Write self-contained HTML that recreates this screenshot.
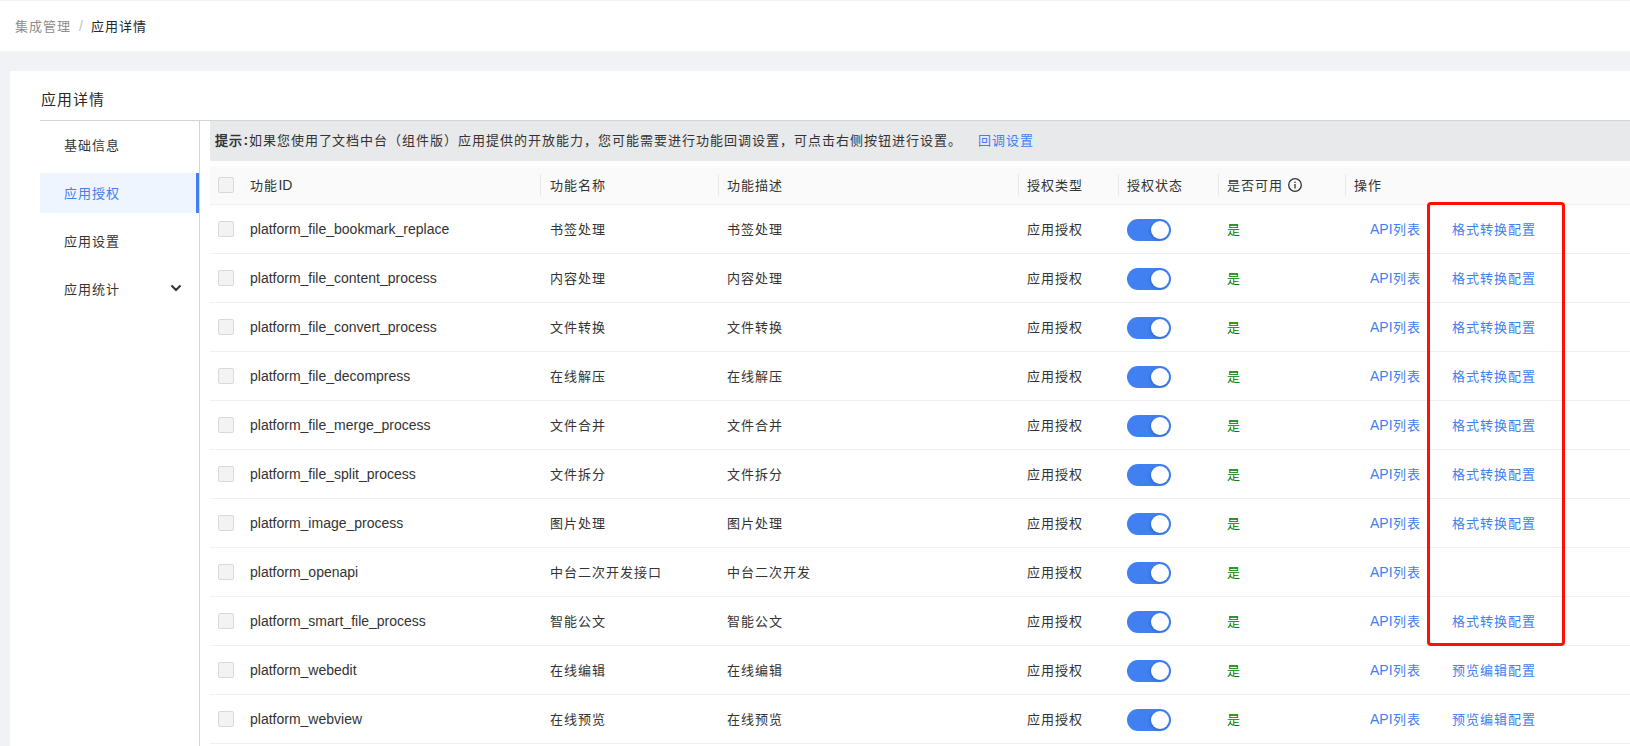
<!DOCTYPE html><html lang="zh-CN"><head><meta charset="utf-8"><style>*{margin:0;padding:0;box-sizing:border-box}
html,body{width:1630px;height:746px;overflow:hidden}
body{background:#f0f2f5;font-family:"Liberation Sans",sans-serif;color:#333;position:relative}
.t14{font-size:14px;line-height:16px;position:absolute;white-space:nowrap}
.t16{font-size:16px;line-height:18px;position:absolute;white-space:nowrap}
.hdr{position:absolute;left:0;top:1px;width:1630px;height:50px;background:#fff}
.card{position:absolute;left:10px;top:71px;width:1620px;height:675px;background:#fff}
.title{left:40px;top:91px;color:#262626}
.divider{position:absolute;left:40px;top:120px;width:1590px;height:1px;background:#d4d4d4}
.sidebar-line{position:absolute;left:199px;top:121px;width:1px;height:625px;background:#d4d4d4}
.active-bg{position:absolute;left:40px;top:173px;width:156px;height:40px;background:#eef5ff}
.active-bar{position:absolute;left:196px;top:173px;width:3px;height:40px;background:#4080f0}
.side{left:64px;color:#333}
.chev{position:absolute;left:170px;top:284px}
.tip{position:absolute;left:210px;top:121px;width:1420px;height:40px;background:#e8e9eb}
.tiptext{left:5px;top:11px;color:#333}
.tiptext b{font-weight:bold}
.tiplink{left:768px;top:11px;color:#4080f0}
.thead{position:absolute;left:210px;top:166px;width:1420px;height:38px;background:#fafafa}
.cb{position:absolute;left:218px;width:16px;height:16px;border:1px solid #d9d9d9;background:#f3f3f3;border-radius:2px}
.th{top:177px;color:#333}
.sep{position:absolute;top:174px;width:1px;height:22px;background:#e8e8e8}
.info{position:absolute;left:1288px;top:178px}
.hb{position:absolute;left:210px;width:1420px;height:1px;background:#f0f0f0}
.td{color:#333}
.lk{color:#4080f0}
.sw{position:absolute;left:1127px;width:44px;height:22px;border-radius:11px;background:#4080f0}
.knob{position:absolute;left:24px;top:2px;width:18px;height:18px;border-radius:9px;background:#fff;box-shadow:-1px 1px 3px rgba(0,30,90,0.25)}
.redbox{position:absolute;left:1427px;top:202px;width:138px;height:444px;border:3px solid #ff1000;border-radius:4px}
.c{font-size:0.93em;letter-spacing:0.0753em;padding-left:0.0376em}
</style></head><body>
<div class="hdr"><div class="topline"></div>
<div class="bc t14" style="left:15px;top:17px;color:#8c8c8c"><span class="c">集成管理</span></div>
<div class="bc t14" style="left:79px;top:17px;color:#c0c0c0">/</div>
<div class="bc t14" style="left:91px;top:17px;color:#262626"><span class="c">应用详情</span></div>
</div>
<div class="card"></div>
<div class="t16 title"><span class="c">应用详情</span></div>
<div class="divider"></div>
<div class="sidebar-line"></div>
<div class="active-bg"></div><div class="active-bar"></div>
<div class="t14 side" style="top:137px"><span class="c">基础信息</span></div>
<div class="t14 side" style="top:185px;color:#4080f0"><span class="c">应用授权</span></div>
<div class="t14 side" style="top:233px"><span class="c">应用设置</span></div>
<div class="t14 side" style="top:281px"><span class="c">应用统计</span></div>
<svg class="chev" width="12" height="8" viewBox="0 0 12 8"><path d="M1.5 1.5 L6 6 L10.5 1.5" fill="none" stroke="#333" stroke-width="2"/></svg>
<div class="tip"><span class="t14 tiptext"><b><span class="c">提示</span>:</b><span class="c">如果您使用了文档中台（组件版）应用提供的开放能力，您可能需要进行功能回调设置，可点击右侧按钮进行设置。</span></span><span class="t14 tiplink"><span class="c">回调设置</span></span></div>
<div class="thead"></div>

<div class="cb" style="top:177px"></div>
<div class="t14 th" style="left:250px"><span class="c">功能</span>ID</div>
<div class="t14 th" style="left:550px"><span class="c">功能名称</span></div>
<div class="t14 th" style="left:727px"><span class="c">功能描述</span></div>
<div class="t14 th" style="left:1027px"><span class="c">授权类型</span></div>
<div class="t14 th" style="left:1127px"><span class="c">授权状态</span></div>
<div class="t14 th" style="left:1227px"><span class="c">是否可用</span></div>
<div class="t14 th" style="left:1354px"><span class="c">操作</span></div>
<div class="sep" style="left:540px"></div>
<div class="sep" style="left:718px"></div>
<div class="sep" style="left:1018px"></div>
<div class="sep" style="left:1118px"></div>
<div class="sep" style="left:1218px"></div>
<div class="sep" style="left:1345px"></div>
<svg class="info" width="14" height="14" viewBox="0 0 14 14"><circle cx="7" cy="7" r="6.3" fill="none" stroke="#333" stroke-width="1.3"/><rect x="6.35" y="6" width="1.3" height="4.5" fill="#333"/><rect x="6.35" y="3.6" width="1.3" height="1.4" fill="#333"/></svg>
<div class="hb" style="top:204px"></div>
<div class="cb" style="top:221px"></div>
<div class="t14 td" style="left:250px;top:221px">platform_file_bookmark_replace</div>
<div class="t14 td" style="left:550px;top:221px"><span class="c">书签处理</span></div>
<div class="t14 td" style="left:727px;top:221px"><span class="c">书签处理</span></div>
<div class="t14 td" style="left:1027px;top:221px"><span class="c">应用授权</span></div>
<div class="sw" style="top:219px"><div class="knob"></div></div>
<div class="t14 td" style="left:1227px;top:221px;color:#008000"><span class="c">是</span></div>
<div class="t14 td lk" style="left:1370px;top:221px">API<span class="c">列表</span></div>
<div class="t14 td lk" style="left:1452px;top:221px"><span class="c">格式转换配置</span></div>
<div class="hb" style="top:253px"></div>
<div class="cb" style="top:270px"></div>
<div class="t14 td" style="left:250px;top:270px">platform_file_content_process</div>
<div class="t14 td" style="left:550px;top:270px"><span class="c">内容处理</span></div>
<div class="t14 td" style="left:727px;top:270px"><span class="c">内容处理</span></div>
<div class="t14 td" style="left:1027px;top:270px"><span class="c">应用授权</span></div>
<div class="sw" style="top:268px"><div class="knob"></div></div>
<div class="t14 td" style="left:1227px;top:270px;color:#008000"><span class="c">是</span></div>
<div class="t14 td lk" style="left:1370px;top:270px">API<span class="c">列表</span></div>
<div class="t14 td lk" style="left:1452px;top:270px"><span class="c">格式转换配置</span></div>
<div class="hb" style="top:302px"></div>
<div class="cb" style="top:319px"></div>
<div class="t14 td" style="left:250px;top:319px">platform_file_convert_process</div>
<div class="t14 td" style="left:550px;top:319px"><span class="c">文件转换</span></div>
<div class="t14 td" style="left:727px;top:319px"><span class="c">文件转换</span></div>
<div class="t14 td" style="left:1027px;top:319px"><span class="c">应用授权</span></div>
<div class="sw" style="top:317px"><div class="knob"></div></div>
<div class="t14 td" style="left:1227px;top:319px;color:#008000"><span class="c">是</span></div>
<div class="t14 td lk" style="left:1370px;top:319px">API<span class="c">列表</span></div>
<div class="t14 td lk" style="left:1452px;top:319px"><span class="c">格式转换配置</span></div>
<div class="hb" style="top:351px"></div>
<div class="cb" style="top:368px"></div>
<div class="t14 td" style="left:250px;top:368px">platform_file_decompress</div>
<div class="t14 td" style="left:550px;top:368px"><span class="c">在线解压</span></div>
<div class="t14 td" style="left:727px;top:368px"><span class="c">在线解压</span></div>
<div class="t14 td" style="left:1027px;top:368px"><span class="c">应用授权</span></div>
<div class="sw" style="top:366px"><div class="knob"></div></div>
<div class="t14 td" style="left:1227px;top:368px;color:#008000"><span class="c">是</span></div>
<div class="t14 td lk" style="left:1370px;top:368px">API<span class="c">列表</span></div>
<div class="t14 td lk" style="left:1452px;top:368px"><span class="c">格式转换配置</span></div>
<div class="hb" style="top:400px"></div>
<div class="cb" style="top:417px"></div>
<div class="t14 td" style="left:250px;top:417px">platform_file_merge_process</div>
<div class="t14 td" style="left:550px;top:417px"><span class="c">文件合并</span></div>
<div class="t14 td" style="left:727px;top:417px"><span class="c">文件合并</span></div>
<div class="t14 td" style="left:1027px;top:417px"><span class="c">应用授权</span></div>
<div class="sw" style="top:415px"><div class="knob"></div></div>
<div class="t14 td" style="left:1227px;top:417px;color:#008000"><span class="c">是</span></div>
<div class="t14 td lk" style="left:1370px;top:417px">API<span class="c">列表</span></div>
<div class="t14 td lk" style="left:1452px;top:417px"><span class="c">格式转换配置</span></div>
<div class="hb" style="top:449px"></div>
<div class="cb" style="top:466px"></div>
<div class="t14 td" style="left:250px;top:466px">platform_file_split_process</div>
<div class="t14 td" style="left:550px;top:466px"><span class="c">文件拆分</span></div>
<div class="t14 td" style="left:727px;top:466px"><span class="c">文件拆分</span></div>
<div class="t14 td" style="left:1027px;top:466px"><span class="c">应用授权</span></div>
<div class="sw" style="top:464px"><div class="knob"></div></div>
<div class="t14 td" style="left:1227px;top:466px;color:#008000"><span class="c">是</span></div>
<div class="t14 td lk" style="left:1370px;top:466px">API<span class="c">列表</span></div>
<div class="t14 td lk" style="left:1452px;top:466px"><span class="c">格式转换配置</span></div>
<div class="hb" style="top:498px"></div>
<div class="cb" style="top:515px"></div>
<div class="t14 td" style="left:250px;top:515px">platform_image_process</div>
<div class="t14 td" style="left:550px;top:515px"><span class="c">图片处理</span></div>
<div class="t14 td" style="left:727px;top:515px"><span class="c">图片处理</span></div>
<div class="t14 td" style="left:1027px;top:515px"><span class="c">应用授权</span></div>
<div class="sw" style="top:513px"><div class="knob"></div></div>
<div class="t14 td" style="left:1227px;top:515px;color:#008000"><span class="c">是</span></div>
<div class="t14 td lk" style="left:1370px;top:515px">API<span class="c">列表</span></div>
<div class="t14 td lk" style="left:1452px;top:515px"><span class="c">格式转换配置</span></div>
<div class="hb" style="top:547px"></div>
<div class="cb" style="top:564px"></div>
<div class="t14 td" style="left:250px;top:564px">platform_openapi</div>
<div class="t14 td" style="left:550px;top:564px"><span class="c">中台二次开发接口</span></div>
<div class="t14 td" style="left:727px;top:564px"><span class="c">中台二次开发</span></div>
<div class="t14 td" style="left:1027px;top:564px"><span class="c">应用授权</span></div>
<div class="sw" style="top:562px"><div class="knob"></div></div>
<div class="t14 td" style="left:1227px;top:564px;color:#008000"><span class="c">是</span></div>
<div class="t14 td lk" style="left:1370px;top:564px">API<span class="c">列表</span></div>
<div class="hb" style="top:596px"></div>
<div class="cb" style="top:613px"></div>
<div class="t14 td" style="left:250px;top:613px">platform_smart_file_process</div>
<div class="t14 td" style="left:550px;top:613px"><span class="c">智能公文</span></div>
<div class="t14 td" style="left:727px;top:613px"><span class="c">智能公文</span></div>
<div class="t14 td" style="left:1027px;top:613px"><span class="c">应用授权</span></div>
<div class="sw" style="top:611px"><div class="knob"></div></div>
<div class="t14 td" style="left:1227px;top:613px;color:#008000"><span class="c">是</span></div>
<div class="t14 td lk" style="left:1370px;top:613px">API<span class="c">列表</span></div>
<div class="t14 td lk" style="left:1452px;top:613px"><span class="c">格式转换配置</span></div>
<div class="hb" style="top:645px"></div>
<div class="cb" style="top:662px"></div>
<div class="t14 td" style="left:250px;top:662px">platform_webedit</div>
<div class="t14 td" style="left:550px;top:662px"><span class="c">在线编辑</span></div>
<div class="t14 td" style="left:727px;top:662px"><span class="c">在线编辑</span></div>
<div class="t14 td" style="left:1027px;top:662px"><span class="c">应用授权</span></div>
<div class="sw" style="top:660px"><div class="knob"></div></div>
<div class="t14 td" style="left:1227px;top:662px;color:#008000"><span class="c">是</span></div>
<div class="t14 td lk" style="left:1370px;top:662px">API<span class="c">列表</span></div>
<div class="t14 td lk" style="left:1452px;top:662px"><span class="c">预览编辑配置</span></div>
<div class="hb" style="top:694px"></div>
<div class="cb" style="top:711px"></div>
<div class="t14 td" style="left:250px;top:711px">platform_webview</div>
<div class="t14 td" style="left:550px;top:711px"><span class="c">在线预览</span></div>
<div class="t14 td" style="left:727px;top:711px"><span class="c">在线预览</span></div>
<div class="t14 td" style="left:1027px;top:711px"><span class="c">应用授权</span></div>
<div class="sw" style="top:709px"><div class="knob"></div></div>
<div class="t14 td" style="left:1227px;top:711px;color:#008000"><span class="c">是</span></div>
<div class="t14 td lk" style="left:1370px;top:711px">API<span class="c">列表</span></div>
<div class="t14 td lk" style="left:1452px;top:711px"><span class="c">预览编辑配置</span></div>
<div class="hb" style="top:743px"></div>
<div class="redbox"></div>
</body></html>
